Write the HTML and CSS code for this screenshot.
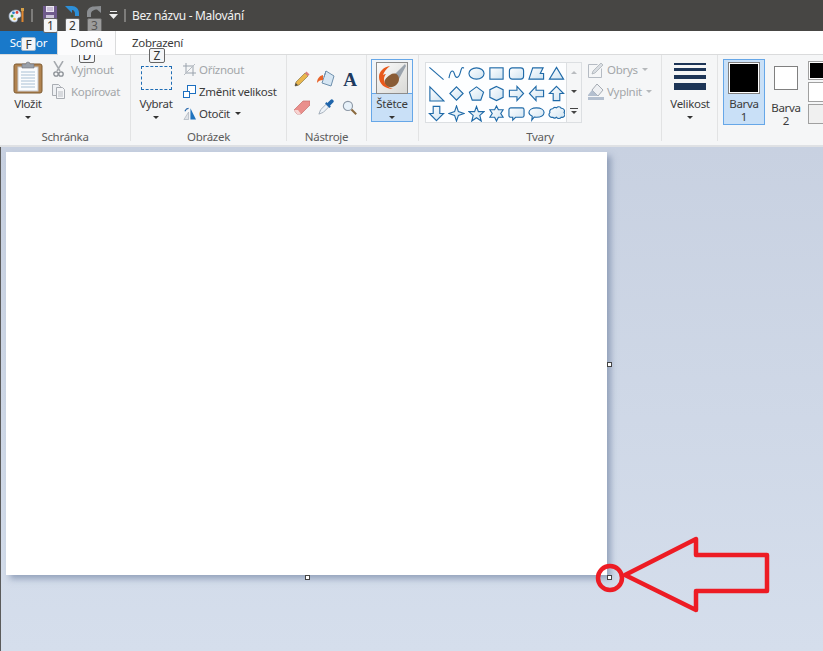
FILE: index.html
```html
<!DOCTYPE html>
<html lang="cs">
<head>
<meta charset="utf-8">
<title>Bez názvu - Malování</title>
<link rel="stylesheet" href="styles.css">
</head>
<body>
<svg class="defs" width="0" height="0" aria-hidden="true">
  <defs>
    <linearGradient id="sg" x1="0" y1="0" x2="1" y2="1"><stop offset="0" stop-color="#ffffff"/><stop offset="1" stop-color="#cfe3f1"/></linearGradient>
    <linearGradient id="pic" x1="0" y1="0" x2="1" y2="1"><stop offset="0" stop-color="#fbfbfb"/><stop offset="1" stop-color="#d9d9d6"/></linearGradient>
  </defs>
</svg>
<div class="window">
  <header class="titlebar">
    <svg class="qat-app" width="18" height="17" viewBox="0 0 18 17">
      <path d="M1 9c0-4 4-6 7-6s5 2 5 5-2 2-3 3 0 4-3 4-6-2-6-6z" fill="#e9eef5" stroke="#8fa3bd" stroke-width=".7"/>
      <circle cx="4" cy="9" r="1.500" fill="#3b9a4c"/><circle cx="5.500" cy="5.800" r="1.400" fill="#2c7fd0"/><circle cx="9" cy="5.500" r="1.400" fill="#d8413a"/><circle cx="6.500" cy="12" r="1.300" fill="#efb72f"/>
      <path d="M14.500 1v14" stroke="#e0862f" stroke-width="2"/><path d="M13 1h3v3h-3z" fill="#d8a24a"/>
    </svg>
    <span class="qat-sep"></span>
    <svg class="qat-save" width="14" height="14" viewBox="0 0 14 14"><path d="M0 0h14v14H0z" fill="#6f5a8c"/><path d="M3 0h8v6H3z" fill="#ece7f2"/><path d="M4 2h6M4 4h6" stroke="#a795bd"/><path d="M3 9h8v5H3z" fill="#cfc6dc"/></svg>
    <svg class="qat-undo" width="14" height="14" viewBox="0 0 14 14"><path d="M0 0h7c4 0 7 3 7 7v3h-4V8c0-2-1-4-3-4v3z" fill="#2d8fd8"/></svg>
    <svg class="qat-redo" width="14" height="15" viewBox="0 0 14 15"><path d="M14 0v7L10 3.500C7 3.500 4 5 4 8v3H0V7c0-4 3-6.500 7-6.500z" fill="#8b8e92"/></svg>
    <svg class="qat-drop" width="9" height="8" viewBox="0 0 9 8"><path d="M1 .5h7" stroke="#eee"/><path d="M0 3h9L4.500 8z" fill="#eee"/></svg>
    <span class="qat-sep sep-b"></span>
    <span class="title">Bez názvu - Malování</span>
  </header>

  <nav class="tabs">
    <span class="tab tab-file">Soubor</span>
    <span class="tab tab-active">Domů</span>
    <span class="tab tab-plain">Zobrazení</span>
  </nav>

  <section class="ribbon">
    <div class="group g-clip">
      <div class="body">
        <div class="big big-paste">
          <svg width="30" height="33" viewBox="0 0 30 33"><rect x="1" y="3" width="28" height="29" rx="2" fill="#b08350" stroke="#7e5a30"/><rect x="5" y="6" width="20" height="24" fill="#fbfcfd" stroke="#c5c8cc"/><path d="M8 11h14M8 14h14M8 17h14M8 20h14M8 23h14M8 26h14" stroke="#a9c0d4"/><path d="M9 3h4a2 2 0 0 1 4 0h4v4H9z" fill="#9aa0a8" stroke="#6e747c" stroke-width=".6"/></svg>
          <span class="big-label">Vložit</span>
          <i class="caret"></i>
        </div>
        <div class="col col-clip">
          <div class="row off">
            <svg width="13" height="16" viewBox="-1 0 13 16"><path d="M1 0l6 10M10 0 4 10" stroke="#a5a9ae" stroke-width="1.500" fill="none"/><circle cx="3" cy="13" r="2.200" fill="none" stroke="#8a8f95" stroke-width="1.300"/><circle cx="8" cy="13" r="2.200" fill="none" stroke="#8a8f95" stroke-width="1.300"/></svg>
            <span>Vyjmout</span>
          </div>
          <div class="row off">
            <svg width="13" height="15" viewBox="0 0 13 15"><path d="M.5.5h6l2 2v9h-8z" fill="#eef0f3" stroke="#a9adb3"/><path d="M4.500 3.500h6l2 2v9h-8z" fill="#f5f6f8" stroke="#a9adb3"/><path d="M6 8h5M6 10h5M6 12h5" stroke="#b9bdc3"/></svg>
            <span>Kopírovat</span>
          </div>
        </div>
      </div>
      <div class="label">Schránka</div>
    </div>

    <div class="group g-image">
      <div class="body">
        <div class="big big-select">
          <span class="marquee"></span>
          <span class="big-label">Vybrat</span>
          <i class="caret"></i>
        </div>
        <div class="col col-image">
          <div class="row off">
            <svg width="13" height="13" viewBox="0 0 13 13"><path d="M3 0v10h10M0 3h10v10" fill="none" stroke="#9aa3ad"/><path d="M1 12 12 1" stroke="#b7bdc4"/></svg>
            <span>Oříznout</span>
          </div>
          <div class="row">
            <svg width="13" height="13" viewBox="0 0 13 13"><rect x="4.500" y=".5" width="8" height="8" fill="#fff" stroke="#1c6fc0"/><rect x=".5" y="6.500" width="6" height="6" fill="#fff" stroke="#1c6fc0"/></svg>
            <span>Změnit velikost</span>
          </div>
          <div class="row">
            <svg width="13" height="14" viewBox="0 0 14 14"><path d="M8 14V2l6 12z" fill="#1f74bf"/><path d="M6 14V6l-5 8z" fill="#dfe3e8" stroke="#9aa3ad" stroke-width=".6"/><path d="M2 5c1-2 2-3 4-3" fill="none" stroke="#1f62a8" stroke-width="1.200"/></svg>
            <span>Otočit</span>
            <i class="caret caret-inline"></i>
          </div>
        </div>
      </div>
      <div class="label">Obrázek</div>
    </div>

    <div class="group g-tools">
      <div class="body tools">
        <svg width="16" height="16" viewBox="0 0 16 16"><path d="M1 15l1-4 9-9 3 3-9 9z" fill="#e9b64d" stroke="#8c7a4a" stroke-width=".7"/><path d="M11 2l1.500-1.500 3 3L14 5z" fill="#dd7f7c"/><path d="M1 15l.7-3 2.300 2.300z" fill="#444"/></svg>
        <svg width="18" height="18" viewBox="0 0 18 18"><path d="M9 1l8 5-3 10-9-3z" fill="#d6e6f3" stroke="#6f90ad"/><path d="M9 1 7 7" stroke="#6f90ad"/><path d="M6 5C2 6 0 9 0 13c1.500-2 3-3 6-3z" fill="#e8642a"/></svg>
        <svg width="18" height="18" viewBox="0 0 18 18"><text class="tool-a" x="9" y="15.500" text-anchor="middle">A</text></svg>
        <svg width="16" height="15" viewBox="0 0 16 15"><path d="M0 10 9 1h7v4l-9 9H3z" fill="#ea8f8c" stroke="#c66f6c" stroke-width=".7"/><path d="M0 10l3 4h4l-3-4z" fill="#f7d4d2"/></svg>
        <svg width="16" height="16" viewBox="0 0 18 18"><path d="M1 17l2-5 6-6 3 3-6 6z" fill="#eef3f8" stroke="#8795a5" stroke-width=".8"/><path d="M8 5l5 5 1.500-1.500-1-1L17 4a2.100 2.100 0 0 0-3-3l-3.500 3.500-1-1z" fill="#1f65ab"/></svg>
        <svg width="15" height="15" viewBox="0 0 19 19"><circle cx="7.500" cy="7.500" r="5.800" fill="#e7f1f9" stroke="#8c98a6" stroke-width="1.400"/><path d="M12 12l6 6" stroke="#8a6a3f" stroke-width="2.500"/></svg>
      </div>
      <div class="label">Nástroje</div>
    </div>

    <div class="group g-brush">
      <div class="body">
        <div class="brush">
          <div class="brush-pic">
            <svg width="32" height="32" viewBox="0 0 32 32"><rect x=".5" y=".5" width="31" height="31" fill="url(#pic)" stroke="#8c8c8c"/><path d="M18 13 29 2l1 2-7 13z" fill="#9aa3ad"/><path d="M14 13c4-3 9-1 9 4s-5 9-10 8-5-5-4-7 3-4 5-5z" fill="#8a5c36"/><path d="M14 4C8 5 3 9 3 15c0 7 6 12 14 12-5-2-9-4-9-10 0-2 1-4 2-5-1 0-2 .5-3 1 1-3 3-6 7-9z" fill="#e8591c"/></svg>
          </div>
          <span class="big-label">Štětce</span>
          <i class="caret"></i>
        </div>
      </div>
    </div>

    <div class="group g-shapes">
      <div class="body">
        <div class="gallery">
          <div class="shape-grid">
            <svg class="sh" viewBox="0 0 18 18"><path d="M1.500 2.500l15 13"/></svg>
            <svg class="sh" viewBox="0 0 18 18"><path class="nofill" d="M1 14C3 3 6 6 7 10s4 5 6-2 2-5 4-5"/></svg>
            <svg class="sh" viewBox="0 0 18 18"><ellipse cx="9" cy="9" rx="8" ry="6"/></svg>
            <svg class="sh" viewBox="0 0 18 18"><rect x="2" y="3" width="14" height="12"/></svg>
            <svg class="sh" viewBox="0 0 18 18"><rect x="1.500" y="3" width="15" height="12" rx="3"/></svg>
            <svg class="sh" viewBox="0 0 18 18"><path d="M1 15 5 3h11l-3 6h3.500v6z"/></svg>
            <svg class="sh" viewBox="0 0 18 18"><path d="M9 2.500 16.500 15h-15z"/></svg>
            <svg class="sh" viewBox="0 0 18 18"><path d="M2 2l15 15H2z"/></svg>
            <svg class="sh" viewBox="0 0 18 18"><path d="M9 2l7 7-7 7-7-7z"/></svg>
            <svg class="sh" viewBox="0 0 18 18"><path d="M9 2l7.500 5.500-3 8.500h-9l-3-8.500z"/></svg>
            <svg class="sh" viewBox="0 0 18 18"><path d="M9 1.500 16 5v8l-7 3.500L2 13V5z"/></svg>
            <svg class="sh" viewBox="0 0 18 18"><path d="M1.500 5.500h8v-4l7 7.500-7 7.500v-4h-8z"/></svg>
            <svg class="sh" viewBox="0 0 18 18"><path d="M16.500 5.500h-8v-4L1.500 9l7 7.500v-4h8z"/></svg>
            <svg class="sh" viewBox="0 0 18 18"><path d="M9 1.500 16.500 9h-4v7.500h-7V9h-4z"/></svg>
            <svg class="sh" viewBox="0 0 18 18"><path d="M9 16.500 16.500 9h-4V1.500h-7V9h-4z"/></svg>
            <svg class="sh" viewBox="0 0 18 18"><path d="M9 1l2 6 6 2-6 2-2 6-2-6-6-2 6-2z"/></svg>
            <svg class="sh" viewBox="0 0 18 18"><path d="M9 1.500 11 7h6l-4.500 4 1.500 6-5-3.500L4 17l1.500-6L1 7h6z"/></svg>
            <svg class="sh" viewBox="0 0 18 18"><path d="M9 1l2 4h5l-2.500 4 2.500 4h-5l-2 4-2-4H2l2.500-4L2 5h5z"/></svg>
            <svg class="sh" viewBox="0 0 18 18"><path d="M3 3h12a2 2 0 0 1 2 2v6a2 2 0 0 1-2 2H8l-3 3v-3H3a2 2 0 0 1-2-2V5a2 2 0 0 1 2-2z"/></svg>
            <svg class="sh" viewBox="0 0 18 18"><path d="M9 3c4.500 0 8 2 8 5s-3.500 5-8 5c-1 0-2 0-2.500-.2L4 16l.5-4C2.500 11 1 9.500 1 8c0-3 3.500-5 8-5z"/></svg>
            <svg class="sh" viewBox="0 0 18 18"><path d="M5 4a3 3 0 0 1 4-1 3 3 0 0 1 5 .5A3 3 0 0 1 17 8a3 3 0 0 1-3 5 3 3 0 0 1-5 0 3 3 0 0 1-4 0 3 3 0 0 1-3-5 3 3 0 0 1 3-4z"/></svg>
          </div>
          <div class="gallery-scroll">
            <i class="caret caret-up"></i>
            <i class="caret caret-dark"></i>
            <i class="caret caret-more"></i>
          </div>
        </div>
        <div class="col col-shape">
          <div class="row off">
            <svg width="17" height="17" viewBox="0 0 17 17"><path d="M.5 3.500h9M.5 3.500v13h13v-9" fill="none" stroke="#b5bbc3"/><path d="M4 13l1-3 8-8 2 2-8 8z" fill="#d9dde2" stroke="#a4aab2" stroke-width=".7"/></svg>
            <span>Obrys</span>
            <i class="caret caret-inline caret-grey"></i>
          </div>
          <div class="row off">
            <svg width="17" height="17" viewBox="0 0 17 17"><path d="M9 1l6 6-5 6-6-6z" fill="#eef0f3" stroke="#a4aab2"/><path d="M0 12 4 7l6 6H0zM0 14h16v3H0z" fill="#b3bfcf"/></svg>
            <span>Vyplnit</span>
            <i class="caret caret-inline caret-grey"></i>
          </div>
        </div>
      </div>
      <div class="label">Tvary</div>
    </div>

    <div class="group g-size">
      <div class="big big-size">
        <div class="bars"><i class="b1"></i><i class="b2"></i><i class="b3"></i><i class="b4"></i></div>
        <span class="big-label">Velikost</span>
        <i class="caret"></i>
      </div>
    </div>

    <div class="group g-colors">
      <div class="color color-on">
        <span class="swatch-frame frame-1"><i class="black"></i></span>
        <span class="color-label">Barva<br>1</span>
      </div>
      <div class="color">
        <span class="swatch-frame frame-2"></span>
        <span class="color-label">Barva<br>2</span>
      </div>
      <div class="palette">
        <span class="pal pal-black"><i></i></span>
        <span class="pal"></span>
        <span class="pal pal-empty"></span>
      </div>
    </div>
  </section>

  <main class="workspace">
    <div class="paper"></div>
    <span class="handle h-right"></span>
    <span class="handle h-bottom"></span>
    <span class="handle h-corner"></span>
  </main>
</div>

<span class="tip tip-1">1</span>
<span class="tip tip-2">2</span>
<span class="tip tip-3">3</span>
<span class="tip tip-f">F</span>
<span class="tip tip-d">D</span>
<span class="tip tip-z">Z</span>

<svg class="annotation" width="823" height="651" viewBox="0 0 823 651" aria-hidden="true">
  <circle cx="610" cy="578" r="12"/>
  <path d="M625 575 696 539v16h71v36h-71v19z"/>
</svg>
</body>
</html>
```

FILE: styles.css
```css
* { box-sizing: border-box; }
html, body { margin: 0; height: 100%; overflow: hidden; }
body { position: relative; font-family: "Noto Sans", "Liberation Sans", sans-serif; font-size: 11.5px; letter-spacing: -.3px; color: #3b3b3b; background: #d3dcea; }
.defs { position: absolute; }
i { display: block; }

.window { display: flex; flex-direction: column; height: 651px; border-left: 1px solid #5b5b5b; }

/* title bar */
.titlebar { display: flex; align-items: center; flex: 0 0 31px; background: #474644; color: #f2f2f2; padding-left: 8px; margin-left: -1px; }
.qat-app { margin-right: 5px; margin-top: -1px; }
.qat-sep { width: 2px; height: 13px; background: #7d7c7a; margin-top: -1px; }
.sep-b { margin-left: 6px; }
.qat-save { margin-left: 10px; margin-top: -5px; }
.qat-undo { margin-left: 8px; margin-top: -5px; }
.qat-redo { margin-left: 8px; margin-top: -5px; }
.qat-drop { margin-left: 8px; margin-top: -1px; }
.title { margin-left: 6px; font-size: 12px; margin-top: -1px; white-space: nowrap; }

/* tabs */
.tabs { display: flex; flex: 0 0 24px; background: #fff; border-bottom: 1px solid #dadbdc; position: relative; margin-left: -1px; }
.tab { display: flex; align-items: center; justify-content: center; height: 23px; padding-bottom: 1px; }
.tab-file { width: 57px; background: #1979ca; color: #fff; }
.tab-active { width: 59px; background: #fcfcfd; border: 1px solid #dadbdc; border-width: 0 1px; height: 24px; margin-bottom: -1px; padding-bottom: 2px; z-index: 1; }
.tab-plain { width: 83px; }

/* ribbon */
.ribbon { display: flex; flex: 0 0 92px; background: #f5f6f7; border-bottom: 2px solid #dfe1e4; margin-left: -1px; overflow: hidden; }
.group { display: flex; flex-direction: column; flex: none; height: 86px; border-right: 1px solid #e2e3e4; padding-top: 4px; }
.body { display: flex; flex: 0 0 71px; }
.label { text-align: center; color: #5c5c5c; line-height: 14px; }
.g-clip { width: 131px; }
.g-image { width: 156px; }
.g-tools { width: 80px; }
.g-brush { width: 52px; }
.g-shapes { width: 243px; }
.g-size { width: 56px; }
.g-colors { flex: 1; border: 0; flex-direction: row; padding-left: 5px; }

.big { display: flex; flex-direction: column; align-items: center; }
.big-label { line-height: 14px; white-space: nowrap; }
.caret { width: 0; height: 0; border: 3px solid transparent; border-top: 3px solid #333; border-bottom: 0; }
.big .caret, .brush .caret { margin-top: 5px; }
.big-paste { width: 30px; margin-left: 13px; padding-top: 2px; }
.big-paste .big-label { margin-top: 3px; }
.col { display: flex; flex-direction: column; margin-top: -1px; }
.row { display: flex; align-items: center; height: 22px; gap: 3px; white-space: nowrap; }
.off { color: #a3a6a9; }
.col-clip { margin-left: 9px; }
.col-clip .row { gap: 6px; }
.big-select { width: 50px; margin-right: 2px; padding-top: 7px; }
.marquee { width: 31px; height: 24px; border: 1px dashed #1f6db5; margin-bottom: 7px; }
.caret-inline { margin-left: 2px; }
.caret-grey { border-top-color: #b5b8bb; }

/* tools */
.tools { display: grid; grid-template-columns: repeat(3, 24px); grid-template-rows: 28px 28px; justify-content: center; justify-items: center; align-items: center; align-content: start; padding-top: 6px; padding-right: 2px; }
.tool-a { font-family: "Liberation Serif", serif; font-weight: 700; font-size: 19px; fill: #1e3a5f; }

/* brush */
.g-brush { padding-left: 4px; }
.brush { display: flex; flex-direction: column; align-items: center; width: 42px; height: 63px; background: #c9e0f7; border: 1px solid #66a7e8; }
.brush-pic { width: 42px; height: 35px; margin: -1px -1px 0; padding: 2px 4px 0; background: #f0f4f8; border: 1px solid #66a7e8; flex: none; }
.brush-pic svg { display: block; }
.brush .big-label { margin-top: 3px; }

/* shapes */
.g-shapes .body { padding-left: 6px; }
.gallery { display: flex; width: 157px; height: 61px; margin-top: 3px; border: 1px solid #dcdfe2; background: #fdfeff; }
.shape-grid { display: grid; grid-template-columns: repeat(7, 20px); grid-auto-rows: 20px; width: 141px; place-items: center; border-right: 1px solid #dcdfe2; }
.sh { width: 17px; height: 17px; fill: url(#sg); stroke: #1f6aa8; stroke-width: 1.2; }
.nofill { fill: none; }
.gallery-scroll { display: flex; flex-direction: column; flex: 1; align-items: center; justify-content: space-around; background: #f5f6f7; }
.caret-up { border: 3px solid transparent; border-bottom: 3px solid #b9bcc0; border-top: 0; }
.caret-dark { border-top-color: #444; }
.caret-more { position: relative; border-top-color: #444; margin-top: 2px; }
.caret-more::before { content: ""; position: absolute; left: -4px; top: -6px; width: 8px; height: 1px; background: #444; }
.col-shape { margin-left: 6px; }
.col-shape .row { gap: 2px; }

/* size */
.big-size { width: 56px; height: 71px; }
.bars { display: flex; flex-direction: column; width: 32px; height: 38px; padding-top: 4px; }
.bars i { background: #1d3557; }
.b1 { height: 2px; margin-bottom: 3px; }
.b2 { height: 3px; margin-bottom: 4px; }
.b3 { height: 4px; margin-bottom: 4px; }
.b4 { height: 7px; }

/* colours */
.color { display: flex; flex-direction: column; align-items: center; width: 42px; height: 66px; border: 1px solid transparent; flex: none; }
.color-on { background: #c9e0f7; border-color: #66a7e8; }
.color-label { text-align: center; line-height: 13px; margin-top: 3px; }
.swatch-frame { display: block; flex: none; }
.frame-1 { width: 32px; height: 32px; margin-top: 2px; border: 1px solid #808080; padding: 1px; background: #fff; }
.black { width: 100%; height: 100%; background: #000; }
.frame-2 { width: 24px; height: 24px; margin-top: 6px; margin-bottom: 8px; border: 1px solid #808080; background: #fff; }
.palette { display: flex; flex-direction: column; gap: 2px; margin-left: 1px; margin-top: 2px; width: 30px; flex: none; }
.pal { display: block; height: 20px; border: 1px solid #a0a0a0; background: #fff; padding: 1px; }
.pal-black { height: 19px; }
.pal-black i { height: 100%; background: #000; }
.pal-empty { background: #f0f0f0; }

/* workspace */
.workspace { position: relative; flex: 1; padding: 5px 0 0 5px; background: linear-gradient(#c8d1e1, #d5deec); overflow: hidden; }
.paper { width: 601px; height: 423px; background: #fff; box-shadow: 4px 4px 6px rgba(90, 110, 145, .5); }
.handle { position: absolute; width: 5px; height: 5px; background: #fff; border: 1px solid #444; }
.h-right { left: 606px; top: 215px; }
.h-bottom { left: 304px; top: 428px; }
.h-corner { left: 606px; top: 428px; }

/* key tips */
.tip { position: absolute; display: flex; align-items: center; justify-content: center; background: #f4f5f7; border: 1px solid #666; border-radius: 2px; font-size: 12px; letter-spacing: 0; color: #333; }
.tip-1, .tip-2, .tip-3 { top: 18px; width: 15px; height: 15px; }
.tip-1 { left: 43px; }
.tip-2 { left: 65px; }
.tip-3 { left: 87px; background: #9c9c9c; color: #555; }
.tip-f { left: 21px; top: 37px; width: 15px; height: 14px; border-color: #9fb6cc; }
.tip-d { left: 79px; top: 48px; width: 16px; height: 15px; }
.tip-z { left: 149px; top: 48px; width: 16px; height: 15px; }

/* annotation */
.annotation { position: absolute; left: 0; top: 0; fill: none; stroke: #ed1c24; stroke-width: 4.5; stroke-linejoin: round; pointer-events: none; }
```
